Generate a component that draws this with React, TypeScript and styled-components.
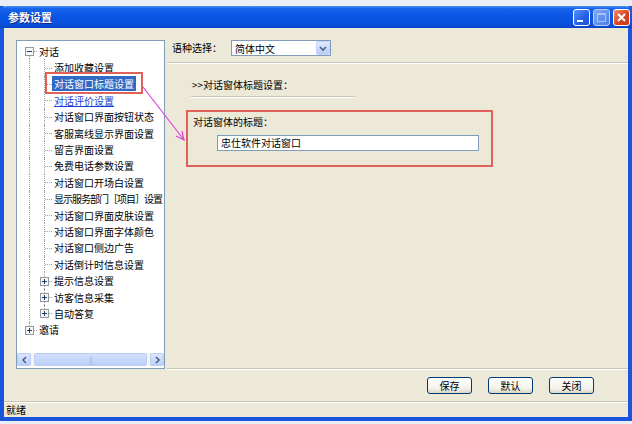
import React from 'react'
import styled, { createGlobalStyle, css } from 'styled-components'

const GlobalStyle = createGlobalStyle`
  *, *::before, *::after {
    box-sizing: border-box;
  }
  html, body {
    margin: 0;
    padding: 0;
    background: #e9eef7;
  }
  body {
    font-family: "Noto Sans CJK SC", "Liberation Sans", sans-serif;
    font-size: 10px;
    color: #000;
  }
`

const XP = {
  face: '#ece9d8',
  frame: '#1a56dc',
  field: '#7f9db9',
  mark: '#e0605a',
}

// 窗口外框
const Window = styled.div`
  margin-top: 6px;
  width: 632px;
  height: 415px;
  display: flex;
  flex-direction: column;
  border: 4px solid ${XP.frame};
  border-top: 0;
  background: ${XP.face};
  & > * {
    flex-shrink: 0;
  }
`

const TitleBar = styled.div`
  height: 22px;
  margin: 0 -4px;
  padding: 0 2px 0 8px;
  display: flex;
  align-items: center;
  background: linear-gradient(#4a93f8 0%, #1764ea 12%, #0a55e4 45%, #0a52de 80%, #0942c6 100%);
  border-radius: 6px 6px 0 0;
`

const Title = styled.div`
  flex: 1;
  color: #fff;
  font-size: 11px;
  font-weight: bold;
  text-shadow: 1px 1px 0 #0a2a8a;
`

const CaptionButtons = styled.div`
  display: flex;
  gap: 3px;
`

const CaptionButton = styled.div<{ $kind: 'min' | 'max' | 'close' }>`
  width: 17px;
  height: 17px;
  border: 1px solid #fff;
  border-radius: 3px;
  display: flex;
  align-items: center;
  justify-content: center;
  ${(p) =>
    p.$kind === 'close'
      ? css`background: linear-gradient(135deg, #f08a6a, #d8421e 60%, #c8381a);`
      : p.$kind === 'max'
      ? css`background: linear-gradient(135deg, #7ea6f4, #4c7ee8); border-color: #b8ccf8;`
      : css`background: linear-gradient(135deg, #5a92fa, #2260e6 60%, #1a52d6);`}
`

const Body = styled.div`
  height: 373px;
  display: flex;
  flex-direction: column;
  padding: 12px 0 0 12px;
  & > * {
    flex-shrink: 0;
  }
`

const Main = styled.div`
  position: relative;
  height: 329px;
  display: flex;
`

// 左侧树
const TreePanel = styled.div`
  width: 149px;
  border: 1px solid ${XP.field};
  background: #fff;
  display: flex;
  flex-direction: column;
  padding-bottom: 2px;
`

const TreeList = styled.div`
  flex: 1;
  padding: 2px 0 0 5px;
  overflow: hidden;
`

const Row = styled.div`
  height: 16.4px;
  display: flex;
  align-items: center;
  white-space: nowrap;
`

type Guide = 'pipe' | 'tee' | 'elbow' | 'first'

const GuideCell = styled.span<{ $kind: Guide }>`
  position: relative;
  flex: 0 0 15px;
  align-self: stretch;
  &::before {
    content: '';
    position: absolute;
    left: 7px;
    border-left: 1px dotted #a0a0a0;
    ${(p) =>
      p.$kind === 'first'
        ? css`top: 50%; bottom: 0;`
        : p.$kind === 'elbow'
        ? css`top: 0; height: 50%;`
        : css`top: 0; bottom: 0;`}
  }
  ${(p) =>
    p.$kind !== 'pipe' &&
    css`
      &::after {
        content: '';
        position: absolute;
        left: 8px;
        right: 0;
        top: 50%;
        border-top: 1px dotted #a0a0a0;
      }
    `}
`

const Expander = styled.svg`
  position: absolute;
  left: 3px;
  top: 50%;
  margin-top: -4px;
  z-index: 1;
`

const Label = styled.span<{ $selected?: boolean; $hot?: boolean; $tight?: boolean }>`
  padding: 1px 2px;
  line-height: 13px;
  ${(p) => p.$tight && css`letter-spacing: -1px;`}
  ${(p) => p.$selected && css`background: #316ac5; color: #fff;`}
  ${(p) => p.$hot && css`color: #1a3fd6; text-decoration: underline;`}
`

const HScroll = styled.div`
  height: 13px;
  display: flex;
  gap: 1px;
  background: #f4f4f0;
`

const ScrollButton = styled.div`
  flex: 0 0 14px;
  border: 1px solid #b8ccf4;
  border-radius: 2px;
  background: linear-gradient(#dbe6fd, #bcd0f8);
  display: flex;
  align-items: center;
  justify-content: center;
`

const ScrollThumb = styled.div`
  flex: 1;
  margin: 0 2px;
  border: 1px solid #b8ccf4;
  border-radius: 2px;
  background: linear-gradient(#d2e0fc, #bccff8);
  display: flex;
  align-items: center;
  justify-content: center;
  color: #9fb6ea;
  font-size: 7px;
  letter-spacing: -1px;
`

// 右侧设置区
const RightPane = styled.div`
  flex: 1;
  margin-left: 2px;
  display: flex;
  flex-direction: column;
  border-bottom: 1px solid #c9c5b3;
  box-shadow: 0 1px 0 #fff;
`

const LangRow = styled.div`
  height: 16px;
  margin-bottom: 6px;
  padding-left: 5px;
  display: flex;
  align-items: center;
`

const FieldName = styled.span<{ $w?: number }>`
  width: ${(p) => (p.$w ? `${p.$w}px` : 'auto')};
  line-height: 14px;
`

const Select = styled.div`
  width: 100px;
  height: 16px;
  border: 1px solid ${XP.field};
  background: #fff;
  display: flex;
  align-items: center;
  padding-left: 3px;
`

const SelectText = styled.span`
  flex: 1;
`

const SelectArrow = styled.div`
  width: 14px;
  height: 14px;
  border: 1px solid #c3d3fd;
  border-radius: 2px;
  background: linear-gradient(#e2eafe, #b9cdfa);
  display: flex;
  align-items: center;
  justify-content: center;
`

const Groove = styled.div`
  height: 2px;
  background: #c9c5b3;
  border-bottom: 1px solid #fff;
`

const SectionHead = styled.div`
  margin: 14px 0 0 24px;
  width: 164px;
  padding: 0 0 4px 1px;
  line-height: 14px;
  border-bottom: 1px solid #c9c5b3;
  box-shadow: 0 1px 0 #fff;
`

const MarkBox = styled.div`
  margin: 13px 0 0 19px;
  width: 307px;
  height: 57px;
  border: 2px solid ${XP.mark};
  padding: 3px 0 0 5px;
  display: flex;
  flex-direction: column;
`

const TextInput = styled.div`
  margin: 6px 0 0 24px;
  width: 262px;
  height: 16px;
  border: 1px solid ${XP.field};
  background: #fff;
  padding-left: 3px;
  line-height: 14px;
`

const ButtonBar = styled.div`
  height: 32px;
  display: flex;
  justify-content: flex-end;
  align-items: flex-start;
  gap: 16px;
  padding: 8px 34px 0 0;
`

const PushButton = styled.button`
  width: 45px;
  height: 17px;
  padding: 0;
  border: 1px solid #003c74;
  border-radius: 3px;
  background: linear-gradient(#ffffff, #f2f1ea 70%, #dcd8c8);
  font: inherit;
  font-size: 10px;
  line-height: 14px;
  color: #000;
`

const StatusBar = styled.div`
  height: 16px;
  padding-left: 2px;
  display: flex;
  align-items: center;
  border-top: 1px solid #c9c5b3;
  box-shadow: inset 0 1px 0 #fff;
`

// 标注框和箭头，叠在界面之上
const Callout = styled.div`
  position: absolute;
  left: 29px;
  top: 32px;
  width: 98px;
  height: 22px;
  border: 2px solid ${XP.mark};
  pointer-events: none;
`

const Pointer = styled.svg`
  position: absolute;
  left: 120px;
  top: 40px;
  overflow: visible;
  pointer-events: none;
`

interface TreeNode {
  label: string
  guides: Guide[]
  open?: boolean
  closed?: boolean
  selected?: boolean
  hot?: boolean
  tight?: boolean
}

const child = (label: string, extra: Partial<TreeNode> = {}): TreeNode => ({
  label,
  guides: ['pipe', 'tee'],
  ...extra,
})

const tree: TreeNode[] = [
  { label: '对话', guides: ['first'], open: true },
  child('添加收藏设置'),
  child('对话窗口标题设置', { selected: true }),
  child('对话评价设置', { hot: true }),
  child('对话窗口界面按钮状态'),
  child('客服离线显示界面设置'),
  child('留言界面设置'),
  child('免费电话参数设置'),
  child('对话窗口开场白设置'),
  child('显示服务部门［项目］设置', { tight: true }),
  child('对话窗口界面皮肤设置'),
  child('对话窗口界面字体颜色'),
  child('对话窗口侧边广告'),
  child('对话倒计时信息设置'),
  child('提示信息设置', { closed: true }),
  child('访客信息采集', { closed: true }),
  { label: '自动答复', guides: ['pipe', 'elbow'], closed: true },
  { label: '邀请', guides: ['elbow'], closed: true },
]

function PlusMinus({ plus }: { plus: boolean }) {
  return (
    <Expander width="9" height="9" viewBox="0 0 9 9">
      <rect x="0.5" y="0.5" width="8" height="8" fill="#f6f6f2" stroke="#919b9c" />
      <line x1="2" y1="4.5" x2="7" y2="4.5" stroke="#1e3a6e" />
      {plus && <line x1="4.5" y1="2" x2="4.5" y2="7" stroke="#1e3a6e" />}
    </Expander>
  )
}

function Chevron({ dir }: { dir: 'left' | 'right' | 'down' }) {
  const d =
    dir === 'left' ? 'M5 1 L2 4 L5 7' : dir === 'right' ? 'M2 1 L5 4 L2 7' : 'M1 2 L4 5 L7 2'
  const w = dir === 'down' ? 8 : 7
  const h = dir === 'down' ? 7 : 8
  return (
    <svg width={w} height={h} viewBox={`0 0 ${w} ${h}`}>
      <path d={d} fill="none" stroke="#4d6185" strokeWidth="1.6" />
    </svg>
  )
}

export default function App() {
  return (
    <>
      <GlobalStyle />
      <Window>
        <TitleBar>
          <Title>参数设置</Title>
          <CaptionButtons>
            <CaptionButton $kind="min">
              <svg width="15" height="15" viewBox="0 0 15 15">
                <rect x="3" y="10" width="6" height="2" fill="#fff" />
              </svg>
            </CaptionButton>
            <CaptionButton $kind="max">
              <svg width="15" height="15" viewBox="0 0 15 15">
                <rect x="3.5" y="3.5" width="8" height="8" fill="none" stroke="#a8c0f4" />
                <rect x="3.5" y="3.5" width="8" height="1.5" fill="#a8c0f4" />
              </svg>
            </CaptionButton>
            <CaptionButton $kind="close">
              <svg width="15" height="15" viewBox="0 0 15 15">
                <path d="M4 4 L11 11 M11 4 L4 11" stroke="#fff" strokeWidth="2" />
              </svg>
            </CaptionButton>
          </CaptionButtons>
        </TitleBar>

        <Body>
          <Main>
            <TreePanel>
              <TreeList>
                {tree.map((node) => (
                  <Row key={node.label}>
                    {node.guides.map((g, i) => (
                      <GuideCell key={i} $kind={g}>
                        {i === node.guides.length - 1 && (node.open || node.closed) && (
                          <PlusMinus plus={!!node.closed} />
                        )}
                      </GuideCell>
                    ))}
                    <Label $selected={node.selected} $hot={node.hot} $tight={node.tight}>
                      {node.label}
                    </Label>
                  </Row>
                ))}
              </TreeList>
              <HScroll>
                <ScrollButton>
                  <Chevron dir="left" />
                </ScrollButton>
                <ScrollThumb>|||</ScrollThumb>
                <ScrollButton>
                  <Chevron dir="right" />
                </ScrollButton>
              </HScroll>
            </TreePanel>

            <RightPane>
              <LangRow>
                <FieldName $w={59}>语种选择：</FieldName>
                <Select>
                  <SelectText>简体中文</SelectText>
                  <SelectArrow>
                    <Chevron dir="down" />
                  </SelectArrow>
                </Select>
              </LangRow>
              <Groove />
              <SectionHead>&gt;&gt;对话窗体标题设置：</SectionHead>
              <MarkBox>
                <FieldName>对话窗体的标题：</FieldName>
                <TextInput>忠仕软件对话窗口</TextInput>
              </MarkBox>
            </RightPane>

            <Callout />
            <Pointer width="60" height="70" viewBox="0 0 60 70">
              <g stroke="#e040e0" strokeWidth="1.2" fill="none">
                <line x1="7" y1="7" x2="48" y2="60" />
                <polyline points="46,51 48,60 40,56" />
              </g>
            </Pointer>
          </Main>

          <ButtonBar>
            <PushButton>保存</PushButton>
            <PushButton>默认</PushButton>
            <PushButton>关闭</PushButton>
          </ButtonBar>
        </Body>

        <StatusBar>就绪</StatusBar>
      </Window>
    </>
  )
}
